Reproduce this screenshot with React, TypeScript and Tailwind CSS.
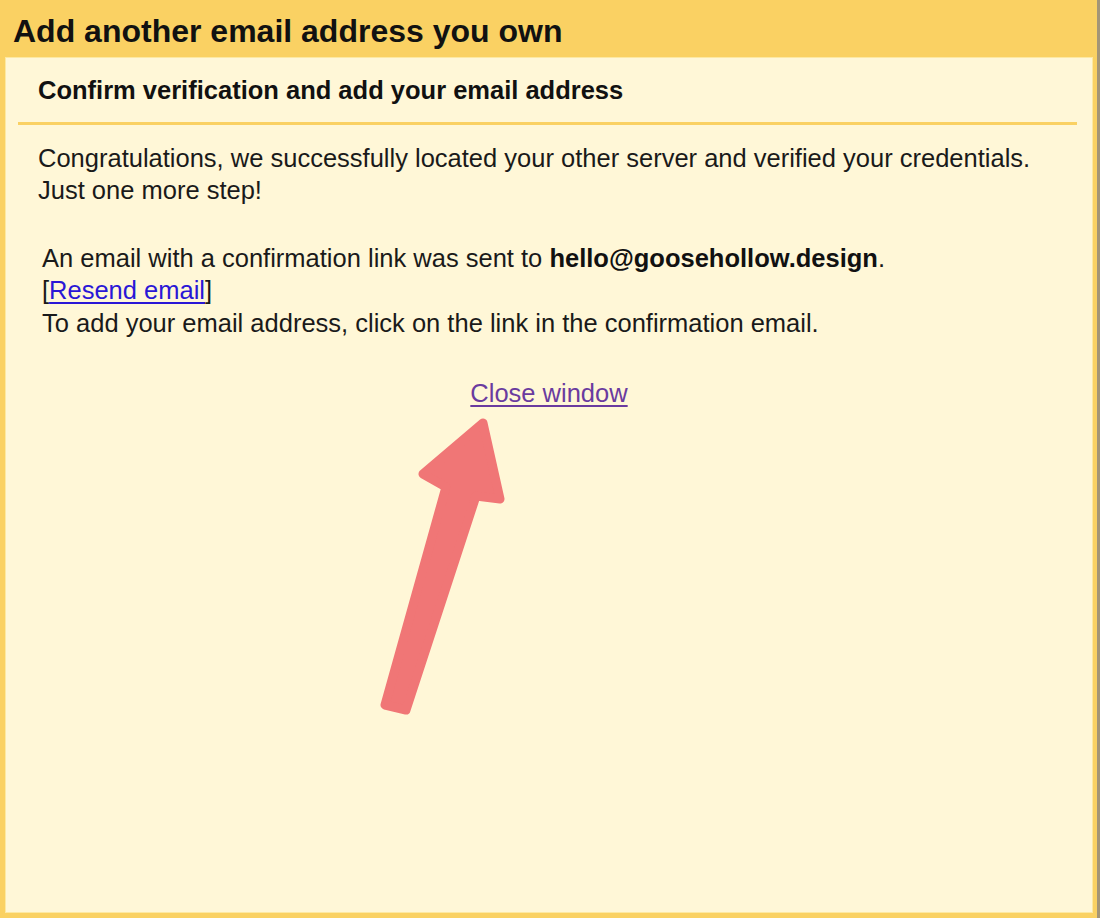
import React from "react";

export default function App() {
  return (
    <div className="relative w-[1100px] h-[918px] bg-[#fad163] flex overflow-hidden font-['Liberation_Sans',Arial,sans-serif] text-[#1a1a1a]">
      <div className="flex-1 flex flex-col">
        <div className="h-[57px] flex items-center pl-[13px] pt-[5px] text-[32px] leading-[40px] font-bold text-[#111111]">
          Add another email address you own
        </div>
        <div className="flex-1 ml-[5px] mr-[4px] mb-[5px] bg-[#fff7d7] border border-[#fde9a2] flex flex-col">
          <div className="ml-[12px] mr-[15px] pt-[16px] pb-[15px] pl-[20px] border-b-[3px] border-[#fad163] text-[25.5px] leading-[32.5px] font-bold text-[#111111]">
            Confirm verification and add your email address
          </div>
          <div className="ml-[12px] mr-[15px] pl-[20px] pt-[17px] text-[25.5px] leading-[32.5px]">
            <p>
              Congratulations, we successfully located your other server and verified your credentials.
              <br />
              Just one more step!
            </p>
            <p className="mt-[35px] pl-[4px]">
              An email with a confirmation link was sent to <b className="text-[#111111]">hello@goosehollow.design</b>.
              <br />
              [<a className="text-[#2a17d6] underline underline-offset-[3px]">Resend email</a>]
              <br />
              To add your email address, click on the link in the confirmation email.
            </p>
          </div>
          <div className="mt-[38px] flex justify-center text-[25.5px] leading-[32.5px]">
            <a className="text-[#6a3b9f] underline underline-offset-[3px]">Close window</a>
          </div>
        </div>
      </div>
      <div className="w-[3px] bg-[#a39577]" />
      <svg
        className="absolute left-0 top-0 pointer-events-none"
        width="1100"
        height="918"
        viewBox="0 0 1100 918"
      >
        <polygon
          points="483,423 500,499 476,496 406,710 385,705 446,487 423,474"
          fill="#f07676"
          stroke="#f07676"
          strokeWidth="9"
          strokeLinejoin="round"
        />
      </svg>
    </div>
  );
}
